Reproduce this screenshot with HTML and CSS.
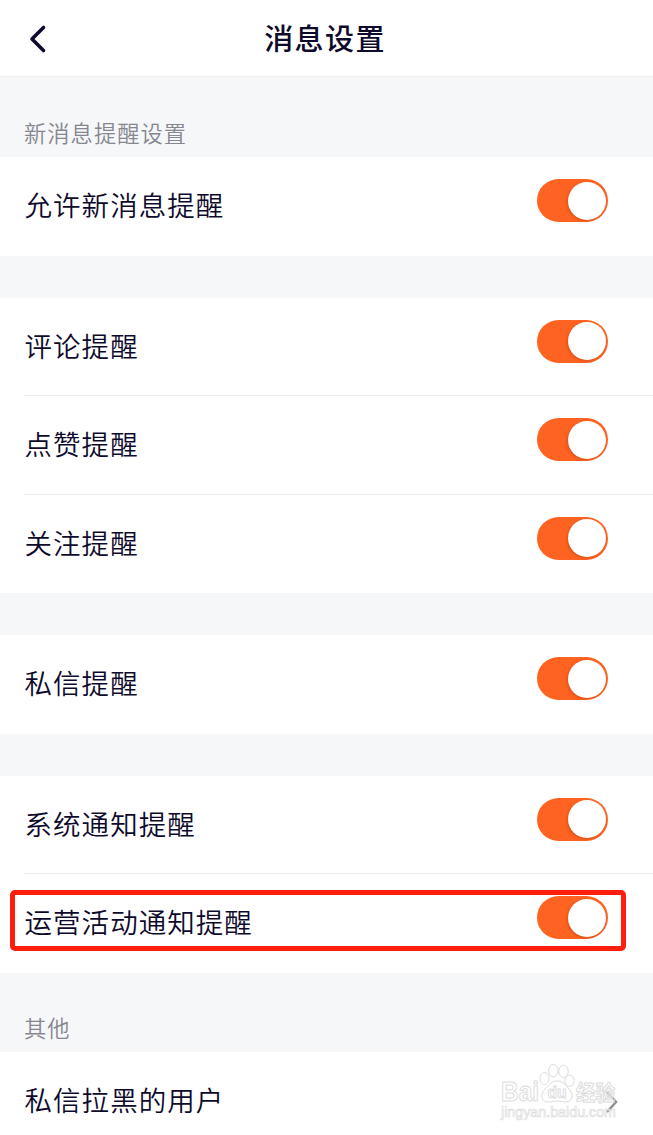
FILE: index.html
```html
<!DOCTYPE html>
<html lang="zh-CN">
<head>
<meta charset="utf-8">
<title>消息设置</title>
<link rel="stylesheet" href="styles.css">
</head>
<body>
<main class="screen">
  <header class="header">
    <svg class="back" width="20" height="32" viewBox="0 0 20 32"><path d="M15.5 4.5 4 16l11.5 11.5"/></svg>
    <h1 class="title">消息设置</h1>
  </header>
  <h2 class="label label-first">新消息提醒设置</h2>
  <section class="group">
    <div class="row"><span class="name">允许新消息提醒</span><span class="toggle"></span></div>
  </section>
  <section class="group spaced">
    <div class="row"><span class="name">评论提醒</span><span class="toggle"></span></div>
    <div class="row"><span class="name">点赞提醒</span><span class="toggle"></span></div>
    <div class="row"><span class="name">关注提醒</span><span class="toggle"></span></div>
  </section>
  <section class="group spaced">
    <div class="row"><span class="name">私信提醒</span><span class="toggle"></span></div>
  </section>
  <section class="group spaced">
    <div class="row"><span class="name">系统通知提醒</span><span class="toggle"></span></div>
    <div class="row marked"><span class="name">运营活动通知提醒</span><span class="toggle"></span></div>
  </section>
  <h2 class="label label-other">其他</h2>
  <section class="group last">
    <div class="row"><span class="name">私信拉黑的用户</span>
      <svg class="chevron" width="14" height="24" viewBox="0 0 14 24"><path d="M2 2l9 10-9 10"/></svg>
    </div>
    <svg class="watermark" width="130" height="68" viewBox="0 0 130 68">
      <g class="mark">
        <text class="brand" x="4" y="42.5" textLength="38" lengthAdjust="spacingAndGlyphs">Bai</text>
        <ellipse cx="47.5" cy="20.5" rx="4.5" ry="6"/>
        <ellipse cx="56.3" cy="12.7" rx="4.7" ry="6.2"/>
        <ellipse cx="66.5" cy="13.3" rx="4.7" ry="6.2"/>
        <ellipse cx="72.5" cy="22.7" rx="4.7" ry="5.7"/>
        <path d="M60 23c-6 0-8 4-12 8-5 5-4 13 3 13 4 0 6-1 9-1s5 1 9 1c7 0 8-8 3-13-4-4-6-8-12-8z"/>
        <text class="du" x="50.500" y="40" textLength="19" lengthAdjust="spacingAndGlyphs">du</text>
        <text class="cn" x="79" y="41.500" textLength="39" lengthAdjust="spacingAndGlyphs">经验</text>
        <text class="url" x="4" y="58.500" textLength="115" lengthAdjust="spacingAndGlyphs">jingyan.baidu.com</text>
      </g>
    </svg>
  </section>
</main>
</body>
</html>
```
FILE: styles.css
```css
*, *::before, *::after { box-sizing: border-box; }
body {
  margin: 0;
  background: #f6f7f9;
  color: #0e0a2c;
  font-family: "Noto Sans CJK SC", sans-serif;
}
.screen {
  height: 1135px;
  overflow: hidden;
}
.header {
  display: grid;
  grid-template-columns: 48px 1fr 48px;
  align-items: center;
  height: 77px;
  background: #fff;
  border-bottom: 1px solid #eeeff1;
}
.back {
  margin: 2px 0 0 28px;
  fill: none;
  stroke: #0e0a2c;
  stroke-width: 3.6;
  stroke-linecap: round;
  stroke-linejoin: round;
}
.title {
  margin: -2px 0 0 -3px;
  text-align: center;
  font-size: 29px;
  font-weight: 500;
  line-height: 44px;
  letter-spacing: 1.4px;
}
.label {
  display: flex;
  align-items: flex-end;
  margin: 0;
  padding: 0 24px 9px;
  color: #86868e;
  font-size: 22.3px;
  font-weight: 350;
  line-height: 32px;
  letter-spacing: 1px;
}
.label-first { height: 80px; }
.label-other { height: 79px; }
.group { background: #fff; }
.spaced { margin-top: 42px; }
.row {
  position: relative;
  display: flex;
  justify-content: space-between;
  height: 98.5px;
  padding: 22px 45px 0 24.5px;
}
.row + .row::before {
  content: "";
  position: absolute;
  top: -1px;
  left: 24px;
  right: 0;
  height: 1px;
  background: #ebebed;
}
.name {
  margin-top: 5px;
  font-size: 27.5px;
  font-weight: 350;
  line-height: 40px;
  letter-spacing: 1.05px;
}
.toggle {
  width: 71px;
  height: 43px;
  padding: 2.5px;
  border-radius: 22px;
  background: #ff6321;
}
.toggle::before {
  content: "";
  display: block;
  width: 38px;
  height: 38px;
  margin-left: auto;
  border-radius: 50%;
  background: #fff;
  box-shadow: -1px 1px 3px rgba(120, 30, 0, .28);
}
.marked::after {
  content: "";
  position: absolute;
  top: 15.5px;
  left: 10px;
  width: 616px;
  height: 61px;
  border: 5px solid #ff1d0d;
  border-radius: 5px;
}
.last { position: relative; height: 83px; }
.chevron {
  margin: 16px -11px 0 0;
  fill: none;
  stroke: #909094;
  stroke-width: 2.5;
}
.watermark {
  position: absolute;
  left: 497px;
  top: 6px;
}
.mark {
  fill: #fff;
  fill-opacity: .6;
  stroke: #dcdcdc;
  stroke-width: 1;
  font-family: "Liberation Sans", Arial, sans-serif;
}
.brand { font-size: 27px; font-weight: 700; }
.du { font-size: 16px; font-weight: 700; }
.cn { font: 700 21px "Noto Sans CJK SC", sans-serif; }
.url { font-size: 15px; stroke-width: .7; }
```
